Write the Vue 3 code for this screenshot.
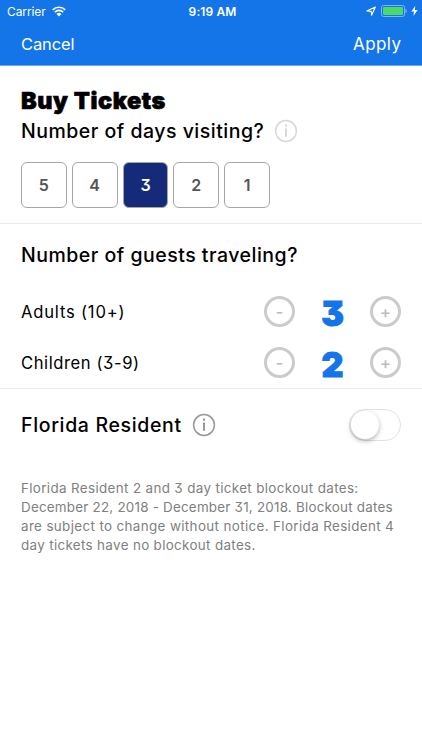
<template>
  <div class="screen">
    <header class="top">
      <div class="status">
        <div class="status-left">
          <span class="carrier">Carrier</span>
          <svg class="wifi" viewBox="0 0 14 11" width="14" height="11">
            <path d="M0.7 3.9a8.9 8.9 0 0 1 12.6 0M2.8 6.1a5.9 5.9 0 0 1 8.4 0" fill="none" stroke="#fff" stroke-width="1.6" />
            <path d="M4.5 8a3.6 3.6 0 0 1 5 0L7 10.6z" fill="#fff" />
          </svg>
        </div>
        <span class="time">9:19 AM</span>
        <div class="status-right">
          <svg width="11" height="11" viewBox="0 0 11 11">
            <path d="M0.8 5L9.4 1L5.6 9.2L5.2 5.4z" fill="none" stroke="#fff" stroke-width="1.1" stroke-linejoin="round" />
          </svg>
          <svg class="battery" width="26" height="12" viewBox="0 0 26 12">
            <rect x="0.5" y="0.5" width="23" height="11" rx="2" fill="none" stroke="#7fb2f2" />
            <rect x="2" y="2" width="20" height="8" rx="0.8" fill="#4cd964" />
            <path d="M25 4.2v3.6" stroke="#7fb2f2" stroke-width="1.2" />
          </svg>
          <svg width="7" height="10" viewBox="0 0 7 10">
            <path d="M4.3 0L0.3 5.6H3L2.4 10L6.6 4H3.8z" fill="#fff" />
          </svg>
        </div>
      </div>
      <nav class="nav">
        <span class="cancel">Cancel</span>
        <span class="apply">Apply</span>
      </nav>
    </header>

    <section class="days">
      <h1>Buy Tickets</h1>
      <div class="heading">
        <h2 class="q-days">Number of days visiting?</h2>
        <svg class="info light" width="24" height="24" viewBox="0 0 24 24">
          <circle cx="12" cy="12" r="10.4" />
          <path d="M12 9.4v8.4M12 5.6v2.2" />
        </svg>
      </div>
      <div class="day-list">
        <button v-for="d in days" :key="d" :class="{ active: d === selected }" @click="selected = d">{{ d }}</button>
      </div>
    </section>

    <section class="guests">
      <h2 class="q-guests">Number of guests traveling?</h2>
      <div v-for="g in guests" :key="g.label" class="guest">
        <span class="label" :class="g.type">{{ g.label }}</span>
        <button class="round" @click="remove(g)">-</button>
        <span class="count">{{ g.count }}</span>
        <button class="round" @click="g.count++">+</button>
      </div>
    </section>

    <section class="resident">
      <h2 class="q-resident">Florida Resident</h2>
      <svg class="info" width="24" height="24" viewBox="0 0 24 24">
        <circle cx="12" cy="12" r="10.4" />
        <path d="M12 9.4v8.4M12 5.6v2.2" />
      </svg>
      <div class="toggle" :class="{ on: resident }" @click="resident = !resident">
        <div class="knob"></div>
      </div>
    </section>

    <p class="note">
      <span class="n1">Florida Resident 2 and 3 day ticket blockout dates:</span>
      <span class="n2">December 22, 2018 - December 31, 2018. Blockout dates</span>
      <span class="n3">are subject to change without notice. Florida Resident 4</span>
      <span class="n4">day tickets have no blockout dates.</span>
    </p>
  </div>
</template>

<script setup>
import { ref } from 'vue';

const days = [5, 4, 3, 2, 1];
const selected = ref(3);
const resident = ref(false);

const guests = ref([
  { type: 'adults', label: 'Adults (10+)', count: 3 },
  { type: 'children', label: 'Children (3-9)', count: 2 },
]);

const remove = (g) => {
  if (g.count > 0) {
    g.count--;
  }
};
</script>

<style>
body {
  background: #fff;
}
</style>

<style scoped>
.screen {
  width: 422px;
  height: 750px;
  overflow: hidden;
  background: #fff;
  color: #000;
  font-family: Inter, "Open Sans", sans-serif;
  font-feature-settings: "cv09"; /* flat-top three */
}

.screen * {
  box-sizing: border-box;
  white-space: nowrap;
}

button {
  padding: 0;
  font-family: inherit;
  font-feature-settings: inherit;
  background: #fff;
  cursor: pointer;
}

h1,
h2 {
  margin: 0;
}

.top {
  height: 66px;
  color: #fff;
  background: #1475e8;
  border-bottom: 1px solid #6ba8f0;
}

.status {
  display: grid;
  grid-template-columns: 1fr auto 1fr;
  align-items: center;
  height: 22px;
  padding: 0 4px 0 7px;
}

.status-left,
.status-right {
  display: flex;
  align-items: center;
}

.status-right {
  justify-content: flex-end;
  gap: 4px;
}

.carrier {
  font-size: 12px;
  letter-spacing: -0.1px;
}

.wifi {
  margin-left: 6px;
}

.time {
  font-size: 12px;
  font-weight: 600;
  letter-spacing: 0.1px;
}

.nav {
  display: flex;
  justify-content: space-between;
  padding: 0 21px;
  font-size: 16.5px;
  line-height: 44px;
}

.cancel {
  letter-spacing: -0.1px;
}

.apply {
  font-size: 17px;
  letter-spacing: 0.4px;
  margin-right: -0.4px;
}

.days {
  height: 158px;
  padding: 21px 21px 0;
  border-bottom: 1px solid #ebebeb;
}

h1 {
  font-size: 23.5px;
  font-weight: 900;
  line-height: 27px;
  letter-spacing: 0.55px;
  -webkit-text-stroke: 0.6px #000;
}

h2 {
  font-size: 19.5px;
  font-weight: 500;
  line-height: 24px;
  letter-spacing: 0.5px;
}

.heading {
  display: flex;
  align-items: center;
  gap: 10px;
  height: 32px;
  margin-top: 1px;
}

.info {
  fill: none;
  stroke: #999;
  stroke-width: 1.5;
}

.info path {
  stroke-width: 2;
}

.info.light {
  stroke: #d8d8d8;
}

.day-list {
  display: flex;
  gap: 5px;
  margin-top: 15px;
}

.day-list button {
  width: 45.8px;
  height: 46px;
  border: 1px solid #a6a6a6;
  border-radius: 6px;
  color: #555;
  font-size: 16px;
  font-weight: 600;
}

.day-list .active {
  color: #fff;
  background: #152a78;
}

.guests {
  height: 165px;
  padding: 19px 21px 0;
  border-bottom: 1px solid #ebebeb;
}

.q-guests {
  margin-bottom: 19px;
}

.guest {
  display: flex;
  align-items: center;
  height: 51px;
}

.label {
  flex: 1;
  font-size: 16.6px;
}

.adults {
  letter-spacing: 0.8px;
}

.children {
  letter-spacing: 0.58px;
}

.round {
  width: 31px;
  height: 31px;
  border: 3px solid #cbcbcb;
  border-radius: 50%;
  color: #bdbdbd;
  font-size: 17px;
  font-weight: 500;
  line-height: 24px;
}

.count {
  width: 75px;
  padding-top: 3px;
  color: #1475e8;
  font-size: 34px;
  font-weight: 900;
  text-align: center;
  -webkit-text-stroke: 1px #1475e8;
}

.resident {
  display: flex;
  align-items: center;
  height: 72px;
  padding: 0 21px;
}

.q-resident {
  letter-spacing: 0.65px;
}

.resident .info {
  margin-left: 10px;
}

.toggle {
  width: 52px;
  height: 32px;
  margin-left: auto;
  padding: 1px;
  border: 1px solid #e2e2e2;
  border-radius: 16px;
}

.knob {
  width: 28px;
  height: 28px;
  border-radius: 50%;
  background: #fff;
  box-shadow: 0 2px 5px rgba(0, 0, 0, 0.3);
}

.toggle.on {
  background: #4cd964;
}

.toggle.on .knob {
  margin-left: auto;
}

.note {
  margin: 18px 21px 0;
  color: #808080;
  font-size: 13.4px;
  line-height: 19px;
}

.note span {
  display: block;
}

.n1 {
  letter-spacing: 0.36px;
}

.n2 {
  letter-spacing: 0.23px;
}

.n3 {
  letter-spacing: 0.37px;
}

.n4 {
  letter-spacing: 0.34px;
}
</style>
